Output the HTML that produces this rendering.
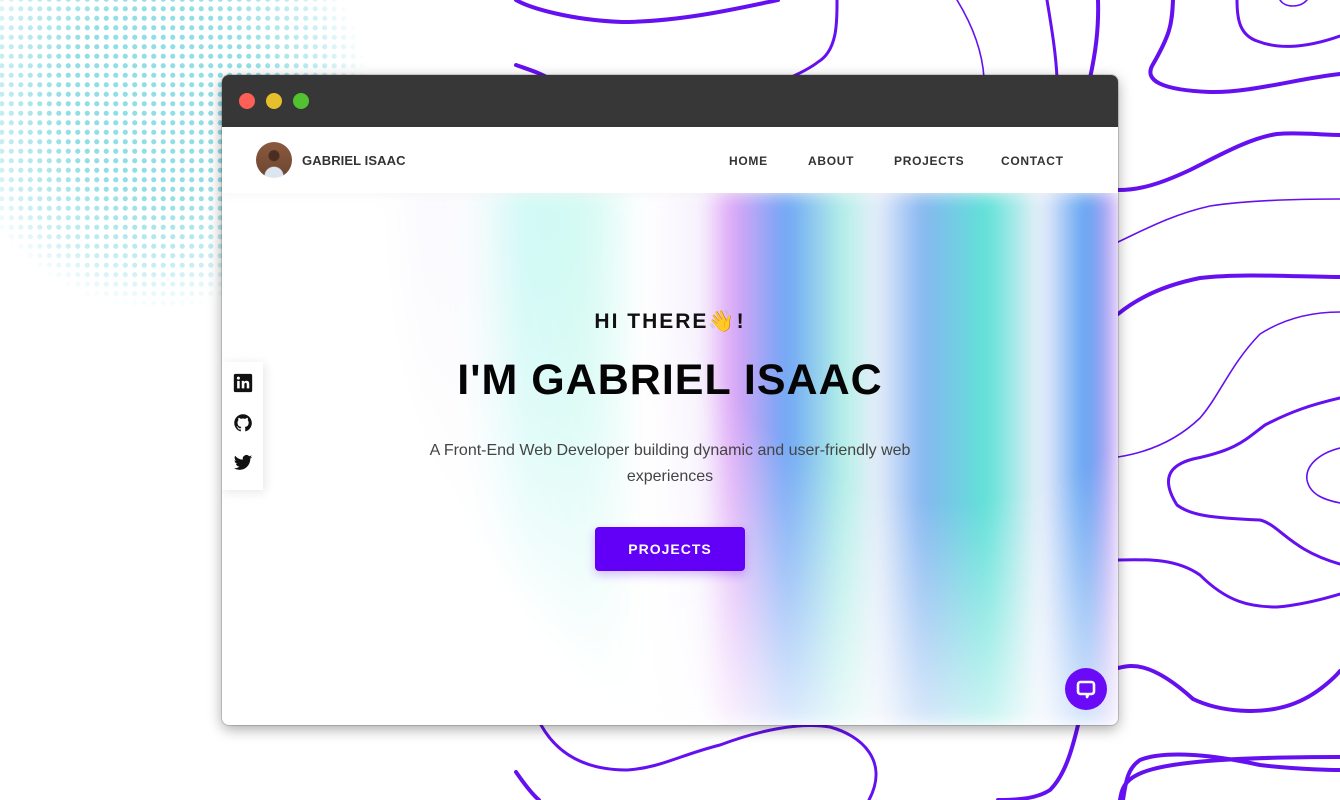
<!DOCTYPE html>
<html><head><meta charset="utf-8"><style>
*{margin:0;padding:0;box-sizing:border-box}
body{width:1340px;height:800px;overflow:hidden;background:#fff;position:relative;font-family:"Liberation Sans",sans-serif}
.dots{position:absolute;left:-60px;top:-110px;width:440px;height:420px;
background-image:radial-gradient(circle,#8fdfe6 2.3px,transparent 2.8px);background-size:9.5px 9.5px}
.dfade{position:absolute;left:-60px;top:-110px;width:440px;height:420px;
background:radial-gradient(circle 210px at 220px 210px,rgba(255,255,255,0) 45%,rgba(255,255,255,.5) 80%,#fff 100%)}
svg.lines{position:absolute;left:0;top:0}
.win{position:absolute;left:222px;top:75px;width:896px;height:650px;border-radius:7px;overflow:hidden;background:#fff;box-shadow:0 4px 14px rgba(0,0,0,.35),0 0 0 1px rgba(0,0,0,.15)}
.bar{height:52px;background:#373737;position:relative}
.bar i{position:absolute;top:18px;width:16px;height:16px;border-radius:50%}
.nav{height:66px;background:#fff;position:relative;box-shadow:0 2px 10px rgba(0,0,0,.04);z-index:3}
.av{position:absolute;left:34px;top:15px;width:36px;height:36px;border-radius:50%;background:radial-gradient(circle at 50% 95%,#dde6f0 0 9px,transparent 10px),radial-gradient(circle at 50% 38%,#4a2e22 0 5px,transparent 6px),linear-gradient(#8a5a3e,#6d4531)}
.name{position:absolute;left:80px;top:26px;font-size:13px;font-weight:700;color:#333;letter-spacing:.1px}
.nav a{position:absolute;top:27px;font-size:12px;font-weight:700;color:#333;letter-spacing:.7px;text-decoration:none}
.hero{position:absolute;left:0;top:118px;width:896px;height:532px;overflow:hidden}
.streak{position:absolute;left:0;top:0;width:896px;height:532px;filter:blur(8px);
background:linear-gradient(90deg,#fff 0,#fff 150px,#e4def6 190px,#f3f3fb 240px,#a8f5ee 300px,#c4f8ee 360px,#fff 420px,#f7f2fd 480px,#dfa6f6 510px,#6fa6f5 565px,#b2f0e7 620px,#e8eefa 655px,#87b6f1 700px,#5fe2d7 765px,#eef0fb 820px,#5a9ff1 865px,#e2b0f6 896px);
-webkit-mask-image:radial-gradient(ellipse 580px 660px at 730px -20px,#000 50%,transparent 100%);
mask-image:radial-gradient(ellipse 580px 660px at 730px -20px,#000 50%,transparent 100%)}
.c{position:absolute;left:0;width:896px;text-align:center}
.hi{top:117px;font-size:21px;font-weight:700;letter-spacing:2px;color:#111}
h1{top:163px;font-size:43px;font-weight:800;letter-spacing:1px;color:#050505}
.sub{top:245px;font-size:16px;line-height:26px;color:#444;left:198px;width:500px}
.btn{position:absolute;left:373px;top:334px;width:150px;height:44px;background:#6200f7;border-radius:4px;color:#fff;font-size:14px;font-weight:700;letter-spacing:1px;text-align:center;line-height:44px;box-shadow:0 4px 10px rgba(98,0,247,.25)}
.soc{position:absolute;left:0;top:169px;width:41px;height:128px;background:#fff;box-shadow:2px 2px 10px rgba(0,0,0,.1)}
.soc svg{position:absolute;left:11px;width:20px;height:20px}
.chat{position:absolute;left:843px;top:475px;width:42px;height:42px;border-radius:50%;background:#6a0af6}
</style></head><body>
<div class="dots"></div><div class="dfade"></div>
<svg class="lines" width="1340" height="800" fill="none" stroke="#6510f0" stroke-linecap="round">
<g stroke-width="4">
<path d="M1173,0 C1172,25 1170,35 1152,66 C1145,80 1160,90 1210,92 C1250,93 1300,78 1340,74"/>
<path d="M1118,190 C1140,190 1160,184 1190,170 C1220,155 1250,138 1277,134 C1300,132 1320,135 1340,135"/>
<path d="M1118,314 C1135,300 1160,286 1200,278 C1243,273 1300,277 1340,277"/>
<path d="M1118,668 C1130,665 1150,660 1193,699 C1220,712 1260,715 1290,705 C1320,695 1340,671 1340,671"/>
<path d="M1123,800 C1126,780 1128,768 1140,760 C1160,752 1200,752 1260,765 C1300,770 1340,770 1340,770"/>
<path d="M516,0 C530,8 570,20 622,22 C680,22 740,8 778,0"/>
<path d="M516,65 C530,70 540,73 548,78"/>
<path d="M1098,0 C1099,30 1095,55 1090,78"/>
<path d="M516,772 C525,785 533,795 539,800"/>
<path d="M1078,725 C1072,750 1065,775 1050,790 C1035,800 1010,800 998,800"/>
<path d="M1340,757 C1130,757 1124,775 1120,800"/>
</g>
<g stroke-width="3">
<path d="M1237,0 C1237,20 1240,35 1257,41 C1275,48 1300,50 1340,36"/>
<path d="M1340,398 C1310,405 1290,412 1265,425 C1245,440 1237,450 1193,459 C1170,465 1160,478 1177,505 C1190,515 1210,518 1260,520 C1280,525 1290,550 1340,564"/>
<path d="M1118,560 C1150,559 1177,559 1200,575 C1227,602 1250,607 1277,607 C1300,605 1320,600 1340,594"/>
<path d="M837,0 C837,20 838,50 818,62 C808,70 795,75 790,78"/>
<path d="M1047,0 C1052,30 1056,55 1057,78"/>
<path d="M541,725 C555,750 580,770 627,770 C660,768 680,755 720,745 C760,730 800,722 830,727 C860,735 890,760 869,800"/>
</g>
<g stroke-width="1.6">
<path d="M1118,242 C1140,232 1170,215 1210,206 C1250,200 1300,199 1340,199"/>
<path d="M1118,457 C1150,452 1177,440 1200,418 C1220,395 1230,365 1260,334 C1290,315 1320,312 1340,312"/>
<path d="M1340,448 C1320,453 1305,465 1307,480 C1310,495 1325,500 1340,503"/>
<path d="M957,0 C968,18 982,45 984,78"/>
<path d="M1280,0 C1285,8 1300,8 1307,0"/>
</g>
</svg>
<div class="win">
<div class="bar"><i style="left:17px;background:#fe5f57"></i><i style="left:44px;background:#e5bf2c"></i><i style="left:71px;background:#52c231"></i></div>
<div class="nav"><div class="av"></div><div class="name">GABRIEL ISAAC</div>
<a style="left:507px">HOME</a><a style="left:586px">ABOUT</a><a style="left:672px">PROJECTS</a><a style="left:779px">CONTACT</a></div>
<div class="hero">
<div class="streak"></div>
<div class="c hi">HI THERE👋!</div>
<h1 class="c">I'M GABRIEL ISAAC</h1>
<div class="c sub">A Front-End Web Developer building dynamic and user-friendly web experiences</div>
<div class="btn">PROJECTS</div>
<div class="soc">
<svg style="top:11px" viewBox="0 0 24 24"><rect x="1" y="1" width="22" height="22" rx="2" fill="#111"/><rect x="5" y="9.5" width="3" height="9" fill="#fff"/><circle cx="6.5" cy="6.2" r="1.8" fill="#fff"/><path d="M10.5 9.5h2.9v1.3c.6-1 1.6-1.5 3-1.5 2.3 0 3.1 1.5 3.1 3.8v5.4h-3v-4.9c0-1.1-.3-1.9-1.3-1.9s-1.600.8-1.6 1.9v4.9h-3.1z" fill="#fff"/></svg>
<svg style="top:51px" viewBox="0 0 24 24"><path fill="#111" d="M12 1.5C6.2 1.5 1.5 6.2 1.5 12c0 4.6 3 8.6 7.2 10 .5.1.7-.2.7-.5v-1.8c-2.900.6-3.5-1.4-3.5-1.4-.5-1.2-1.2-1.5-1.2-1.5-1-.7.1-.7.1-.7 1 .1 1.6 1.1 1.6 1.1.9 1.6 2.5 1.1 3.1.9.1-.7.4-1.1.7-1.4-2.3-.3-4.8-1.2-4.8-5.2 0-1.1.4-2.1 1.1-2.8-.1-.3-.5-1.3.1-2.8 0 0 .9-.3 2.9 1.1a10 10 0 0 1 5.2 0c2-1.4 2.9-1.1 2.9-1.1.6 1.5.2 2.5.1 2.8.7.7 1.1 1.7 1.1 2.8 0 4-2.5 4.9-4.8 5.2.4.3.7 1 .7 1.9v2.9c0 .3.2.6.7.5 4.2-1.4 7.2-5.4 7.2-10C22.5 6.2 17.8 1.5 12 1.5z"/></svg>
<svg style="top:91px" viewBox="0 0 24 24"><path fill="#111" d="M23 4.6c-.8.4-1.7.6-2.6.7.9-.6 1.6-1.4 2-2.5-.9.5-1.9.9-2.9 1.1A4.5 4.5 0 0 0 11.8 8 12.8 12.8 0 0 1 2.5 3.3a4.5 4.5 0 0 0 1.4 6c-.7 0-1.4-.2-2-.6 0 2.2 1.6 4 3.6 4.4-.7.2-1.4.2-2 .1.6 1.8 2.2 3.1 4.2 3.1A9 9 0 0 1 1 18.2 12.8 12.8 0 0 0 7.900 20.2c8.3 0 12.8-6.9 12.8-12.8v-.6c.9-.6 1.7-1.4 2.3-2.2z"/></svg>
</div>
<div class="chat"><svg width="42" height="42" viewBox="0 0 42 42" fill="none" stroke="#fff" stroke-width="2.6" stroke-linejoin="round" stroke-linecap="round"><path d="M15.5 14h11a2.5 2.5 0 0 1 2.5 2.5v7a2.5 2.5 0 0 1-2.5 2.5h-3l-1.5 3v-3h-6.5a2.5 2.5 0 0 1-2.5-2.5v-7a2.5 2.5 0 0 1 2.5-2.5z"/></svg></div>
</div>
</div>
</body></html>
